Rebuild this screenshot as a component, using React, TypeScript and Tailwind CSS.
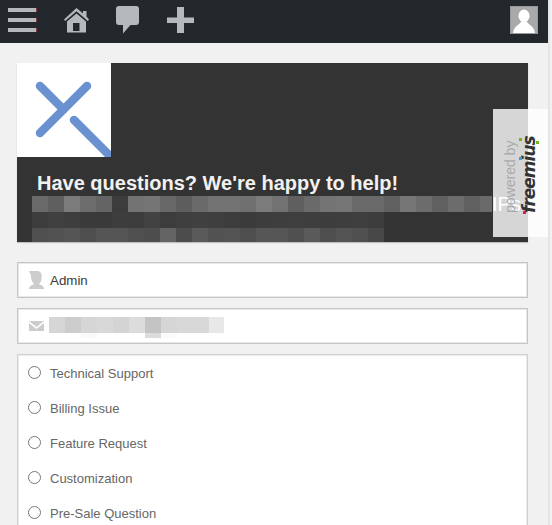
const row1 = ["#696969","#5f5f5f","#7b7b7b","#6d6d6d","#646464","#3c3c3c","#737373","#757575","#686868","#5d5d5d","#6a6a6a","#737373","#727272","#707070","#7b7b7b","#727272","#5f5f5f","#6a6a6a","#747474","#767676","#6a6a6a","#6a6a6a","#606060","#767676","#6c6c6c","#606060","#6c6c6c","#606060"];
const row2 = ["#3c3c3c","#404040","#3e3e3e","#3a3a3a","#3a3a3a","#3d3d3d","#3c3c3c","#424242","#3c3c3c","#3f3f3f","#404040","#3f3f3f","#3c3c3c","#3b3b3b","#3d3d3d","#3e3e3e","#3f3f3f","#3e3e3e","#3d3d3d","#3e3e3e","#3f3f3f","#3d3d3d"];
const row3 = ["#505050","#525252","#555555","#4e4e4e","#555555","#555555","#505050","#4d4d4d","#646464","#4c4c4c","#5a5a5a","#525252","#545454","#4e4e4e","#565656","#565656","#505050","#5a5a5a","#4e4e4e","#545454","#505050","#484848"];
const mailTop = ["#d6d6d6","#cccccc","#d6d6d6","#d8d8d8","#d4d4d4","#dcdcdc","#c4c4c4","#d6d6d6","#d8d8d8","#d8d8d8"];
const mailBottom = ["#ffffff","#ffffff","#fafafa","#ffffff","#ffffff","#ffffff","#dcdcdc","#fbfbfb"];
const options = ["Technical Support","Billing Issue","Feature Request","Customization","Pre-Sale Question"];

function Blocks({ colors }: { colors: string[] }) {
  return (
    <div className="flex h-4 shrink-0">
      {colors.map((c, i) => (
        <div key={i} className="h-4 w-4 shrink-0" style={{ backgroundColor: c }} />
      ))}
    </div>
  );
}

export default function App() {
  return (
    <div className="flex h-[525px] w-[552px] overflow-hidden bg-[#f1f1f1] font-['Liberation_Sans',Arial,sans-serif]">
      <div className="relative w-[548px] shrink-0">
        <header className="flex h-[43px] items-start bg-[#23282d]">
          <div className="ml-2 mt-2 flex w-[29px] flex-col gap-[6px]">
            <div className="h-1 border-r border-[#8a3a3a] bg-[#b4b9be]" />
            <div className="h-1 border-r border-[#8a3a3a] bg-[#b4b9be]" />
            <div className="h-1 border-r border-[#8a3a3a] bg-[#b4b9be]" />
          </div>
          <svg className="ml-[27px] mt-2 h-[25px] w-[25px]" viewBox="0 0 25 25">
            <path d="M12.5 0 L19 5.5 V3 H22.5 V8.5 L25 11.5 L23.8 13 L12.5 3.2 L1.2 13 L0 11.5 Z" fill="#b4b9be" />
            <path d="M12.5 5.5 L22 13.5 V24.5 H3 V13.5 Z M9 15 V23 H15.5 V15 Z" fill="#b4b9be" fillRule="evenodd" />
          </svg>
          <svg className="ml-[27px] mt-[6px] h-[28px] w-[23px]" viewBox="0 0 23 28">
            <path d="M3 0 H20 Q23 0 23 3 V16 Q23 19 20 19 H14.5 L7 27.5 V19 H3 Q0 19 0 16 V3 Q0 0 3 0 Z" fill="#b4b9be" />
          </svg>
          <svg className="ml-[28px] mt-[7px] h-[26px] w-[27px]" viewBox="0 0 27 26">
            <path d="M10 0 H17 V10.5 H27 V16 H17 V26 H10 V16 H0 V10.5 H10 Z" fill="#b4b9be" />
          </svg>
          <div className="ml-auto mr-[10px] mt-[6px] h-7 w-7 overflow-hidden border border-[#999999] bg-[#a9a9a9]">
            <svg viewBox="0 0 26 26" className="h-full w-full">
              <ellipse cx="13" cy="9" rx="5.5" ry="6.5" fill="#fff" />
              <path d="M2 26 C3 19 8 18 10 15 H16 C18 18 23 19 24 26 Z" fill="#fff" />
            </svg>
          </div>
        </header>

        <main className="px-[17px] pr-5 pt-5">
          <section className="h-[179px] w-[511px] overflow-hidden bg-[#333333] shadow-[0_1px_1px_rgba(0,0,0,0.2)]">
            <div className="h-[94px] w-[94px] bg-white">
              <svg viewBox="0 0 94 94" className="h-full w-full">
                <g stroke="#6a91d0" strokeWidth="8.5" strokeLinecap="round" fill="none">
                  <path d="M23 23 L45 45" />
                  <path d="M70 23 L23 70" />
                  <path d="M57 57 L100 100" />
                </g>
              </svg>
            </div>
            <h1 className="ml-5 mt-[14px] h-[25px] whitespace-nowrap text-[20px] leading-[25px] font-bold text-[#f1f1f1]">
              Have questions? We're happy to help!
            </h1>
            <div className="ml-[15px] flex flex-col">
              <div className="flex items-center">
                <Blocks colors={row1} />
                <div className="h-4 w-3 shrink-0 bg-[#6a6a6a]" />
                <span className="whitespace-nowrap text-[20px] leading-4 text-white">IPs</span>
              </div>
              <Blocks colors={row2} />
              <Blocks colors={row3} />
            </div>
          </section>

          <div className="mt-5 flex h-9 w-[511px] items-center border border-[#c6c6c6] bg-white pt-[2px] shadow-[inset_0_0_0_1px_#e8e8e8]">
            <svg viewBox="0 0 15 18" className="-mt-[2px] ml-[11px] h-[18px] w-[15px]">
              <path d="M0 0 H9 C13 1 13 5 12.5 8 C12 11 11 12 10 13 C12 14 15 15 15 18 H0 C0 15 3 14 5 13 C3 11 2 8 2 6 C2 4 1 2 0 0 Z" fill="#cccccc" />
            </svg>
            <span className="ml-[6px] text-[13.33px] text-[#3a3a3a]">Admin</span>
          </div>

          <div className="mt-[10px] flex h-9 w-[511px] border border-[#c6c6c6] bg-white shadow-[inset_0_0_0_1px_#e8e8e8]">
            <svg viewBox="0 0 15 10" className="ml-[11px] mt-[12px] h-[10px] w-[15px]">
              <path d="M0 0 H15 L7.5 6 Z" fill="#cccccc" />
              <path d="M0 2 L7.5 8 L15 2 V10 H0 Z" fill="#cccccc" />
            </svg>
            <div className="ml-[5px] mt-2 flex flex-col">
              <div className="flex">
                <Blocks colors={mailTop} />
                <div className="h-4 w-[15px] bg-[#e8e8e8]" />
              </div>
              <div className="flex h-[5px]">
                {mailBottom.map((c, i) => (
                  <div key={i} className="h-[5px] w-4" style={{ backgroundColor: c }} />
                ))}
              </div>
            </div>
          </div>

          <div className="mt-[10px] flex h-[200px] w-[511px] flex-col gap-[19px] border border-[#d0d0d0] bg-white pl-[10px] pt-[11px] shadow-[inset_0_0_0_1px_#ececec]">
            {options.map((o) => (
              <div key={o} className="flex h-4 items-center">
                <span className="mb-1 h-[13px] w-[13px] rounded-full border border-[#767676] bg-white" />
                <span className="ml-[9px] text-[13px] leading-4 text-[#666666]">{o}</span>
              </div>
            ))}
          </div>
        </main>

        <aside className="absolute right-0 top-[109px] flex h-[128px] w-[55px] items-start bg-white/80 pl-[9px]">
          <span className="mt-[33px] h-[71px] rotate-180 whitespace-nowrap text-[14px] leading-[16px] text-[#aaaaaa] [writing-mode:vertical-rl]">
            powered by
          </span>
          <span className="relative ml-[3px] mt-[24px] h-[80px] rotate-180 whitespace-nowrap font-['DejaVu_Sans',sans-serif] text-[17px] leading-[17px] font-bold italic tracking-[-1px] text-[#333333] [writing-mode:vertical-rl]">
            freemius
          </span>
          <span className="absolute left-[26px] top-[29px] h-[3px] w-[3px] bg-[#7ab317]" />
          <span className="absolute left-[43px] top-[32px] h-[3px] w-[3px] bg-[#7ab317]" />
          <span className="absolute left-[26px] top-[48px] h-[3px] w-[3px] bg-[#3aa0d8]" />
          <span className="absolute left-[30px] top-[102px] h-[3px] w-[3px] bg-[#d81b60]" />
        </aside>
      </div>
      <div className="w-1 shrink-0 border-l-2 border-[#e5e5e5]" />
    </div>
  );
}
